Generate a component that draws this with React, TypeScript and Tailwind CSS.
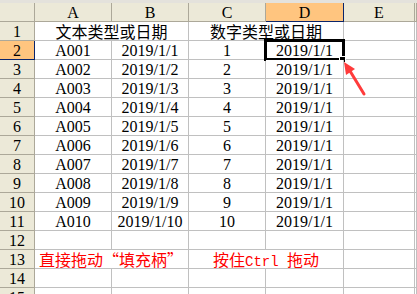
const cols = "grid grid-cols-[35px_77px_77px_77px_78px_71px_1fr]";
const latin = "font-['Liberation_Serif','Noto_Sans_CJK_SC',serif]";
const cjk = "font-['Noto_Sans_CJK_SC',sans-serif] [font-feature-settings:'fwid']";

const cell =
	"h-[19px] border-r border-b border-[#c0c0c0] bg-white text-[16px] leading-[19px] text-center whitespace-nowrap";
const head =
	"h-[19px] border-r border-b border-[#aca899] bg-[#ece9d8] text-[16px] leading-[19px] text-center";
const headOn =
	"h-[19px] border-r border-b border-[#0a246a] bg-[#ffc57f] text-[16px] leading-[19px] text-center";

const rows = Array.from({ length: 10 }).map((_, i) => ({
	id: `A${String(i + 1).padStart(3, "0")}`,
	text: `2019/1/${i + 1}`,
	num: i + 1,
}));

export default function App() {
	return (
		<div className={`relative w-[417px] h-[294px] overflow-hidden bg-white text-black ${latin}`}>
			<div className="h-[3px] bg-[#e4e2dc]" />

			<div className={cols}>
				<div className={head} />
				<div className={head}>A</div>
				<div className={head}>B</div>
				<div className={head}>C</div>
				<div className={headOn}>D</div>
				<div className={head}>E</div>
				<div className={head} />

				<div className={head}>1</div>
				<div className={`${cell} col-span-2 ${cjk}`}>文本类型或日期</div>
				<div className={`${cell} col-span-2 ${cjk}`}>数字类型或日期</div>
				<div className={cell} />
				<div className={cell} />

				{rows.map((r, i) => (
					<div key={r.id} className="contents">
						<div className={i === 0 ? headOn : head}>{i + 2}</div>
						<div className={cell}>{r.id}</div>
						<div className={cell}>{r.text}</div>
						<div className={cell}>{r.num}</div>
						<div className={`${cell} relative`}>
							{r.text.replace(/\d+$/, "1")}
							{i === 0 && (
								<>
									<div className="absolute -left-[2px] -top-[2px] w-[81px] h-[22px] border-[3px] border-black" />
									<div className="absolute left-[73px] top-[15px] w-[7px] h-[7px] bg-black border border-white" />
								</>
							)}
						</div>
						<div className={cell} />
						<div className={cell} />
					</div>
				))}

				<div className={head}>12</div>
				<div className={cell} />
				<div className={cell} />
				<div className={cell} />
				<div className={cell} />
				<div className={cell} />
				<div className={cell} />

				<div className={head}>13</div>
				<div className={`${cell} col-span-2 text-left pl-[4px] ${cjk}`}>
					<span className="text-[#ff0000]">直接拖动“填充柄”</span>
				</div>
				<div className={`${cell} col-span-2 text-left pl-[24px] ${cjk}`}>
					<span className="text-[#ff0000]">
						按住<span className="font-['Liberation_Mono',monospace] text-[14px]">Ctrl </span>拖动
					</span>
				</div>
				<div className={cell} />
				<div className={cell} />

				{[14, 15].map((n) => (
					<div key={n} className="contents">
						<div className={head}>{n}</div>
						<div className={cell} />
						<div className={cell} />
						<div className={cell} />
						<div className={cell} />
						<div className={cell} />
						<div className={cell} />
					</div>
				))}
			</div>

			<svg
				className="absolute left-0 top-0 pointer-events-none"
				width="417"
				height="294"
				viewBox="0 0 417 294"
			>
				<line x1="364" y1="94" x2="350" y2="71" stroke="#ff3b3b" strokeWidth="3" strokeLinecap="round" />
				<polygon points="344,62 355,69 346,75" fill="#ff3b3b" />
			</svg>
		</div>
	);
}
